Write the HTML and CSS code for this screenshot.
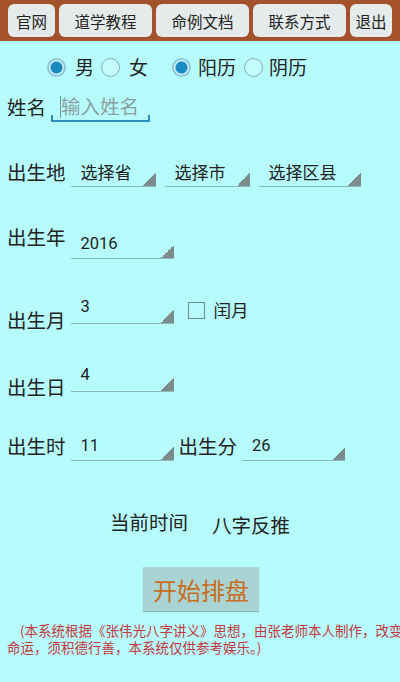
FILE: index.html
```
<!DOCTYPE html>
<html lang="zh">
<head>
  <meta charset="UTF-8" />
  <meta name="viewport" content="width=device-width, initial-scale=1.0"/>
  <title>八字排盘</title>
  <link rel="stylesheet" href="styles.css">
</head>
<body>

  <!-- 顶部菜单 -->
  <div class="menu">
    <button class="menu-btn w-sm">官网</button>
    <button class="menu-btn">道学教程</button>
    <button class="menu-btn">命例文档</button>
    <button class="menu-btn">联系方式</button>
    <button class="menu-btn w-xs">退出</button>
  </div>

  <!-- 性别 / 历法 -->
  <div class="radios">
    <span class="radio on"></span><span class="radio-txt">男</span>
    <span class="radio r2"></span><span class="radio-txt">女</span>
    <span class="radio on r3"></span><span class="radio-txt t3">阳历</span>
    <span class="radio r4"></span><span class="radio-txt t4">阴历</span>
  </div>

  <div class="fila fila-nombre">
    <span class="etiqueta">姓名</span>
    <input class="nombre" type="text" placeholder="输入姓名">
  </div>

  <div class="fila fila-lugar">
    <span class="etiqueta">出生地</span>
    <div class="spinner w-prov">选择省</div>
    <div class="spinner w-prov sep">选择市</div>
    <div class="spinner w-dist sep">选择区县</div>
  </div>

  <div class="fila fila-anio">
    <span class="etiqueta">出生年</span>
    <div class="spinner num">2016</div>
  </div>

  <div class="fila fila-mes">
    <span class="etiqueta">出生月</span>
    <div class="spinner num">3</div>
    <span class="check"></span>
    <span class="check-txt">闰月</span>
  </div>

  <div class="fila fila-dia">
    <span class="etiqueta">出生日</span>
    <div class="spinner num">4</div>
  </div>

  <div class="fila fila-hora">
    <span class="etiqueta">出生时</span>
    <div class="spinner num">11</div>
    <span class="etiqueta">出生分</span>
    <div class="spinner num">26</div>
  </div>

  <div class="acciones">
    <button class="accion">当前时间</button>
    <button class="accion bajo">八字反推</button>
  </div>

  <button class="empezar">开始排盘</button>

  <p class="aviso">(本系统根据《张伟光八字讲义》思想，由张老师本人制作，改变<br>命运，须积德行善，本系统仅供参考娱乐。)</p>

</body>
</html>
```

FILE: styles.css
```
html, body {
  margin: 0;
  overflow: hidden;
}

body {
  background-color: #b6fcfc;
  color: #222;
  font-family: Roboto, "Noto Sans CJK SC", sans-serif;
  width: 400px;
  height: 682px;
}

button {
  font-family: "Noto Sans CJK SC", sans-serif;
  border: none;
  padding: 0;
  cursor: pointer;
}

/* Menu */
.menu {
  background-color: #a3522b;
  height: 41px;
  box-sizing: border-box;
  padding: 4px 0 0 8px;
  display: flex;
  gap: 4px;
}

.menu-btn {
  width: 93px;
  height: 33px;
  background-color: #e5ebea;
  border-radius: 6px;
  font-size: 15.5px;
  color: #222;
}

.menu-btn.w-sm { width: 47px; }
.menu-btn.w-xs { width: 42px; }

/* Radios */
.radios {
  margin-top: 14px;
  height: 24px;
  padding-left: 47px;
  display: flex;
  align-items: center;
  font-family: "Noto Sans CJK SC", sans-serif;
  font-size: 19px;
}

.radio {
  width: 19px;
  height: 19px;
  box-sizing: border-box;
  border-radius: 50%;
  border: 1.5px solid #86aeb6;
  background: #c4fbfb;
}

.radio.on {
  border: 2px solid #8fc6dc;
  background: radial-gradient(circle, #1a8ac3 0 5.5px, #d6f4f8 6.5px);
}

.radio-txt { margin-left: 9px; line-height: 24px; }
.radio.r2 { margin-left: 7px; }
.radio.r3 { margin-left: 24px; }
.radio-txt.t3 { margin-left: 7px; }
.radio.r4 { margin-left: 8px; }
.radio-txt.t4 { margin-left: 6px; }

/* Filas */
.fila {
  display: flex;
  align-items: flex-start;
  padding-left: 7px;
}

.etiqueta {
  font-family: "Noto Sans CJK SC", sans-serif;
  font-size: 19.5px;
  line-height: 26px;
  margin-right: 5px;
  color: #222;
}

.fila-nombre { margin-top: 13px; height: 30px; }
.fila-nombre .etiqueta { margin-top: 2px; }

.nombre {
  width: 99px;
  height: 30px;
  box-sizing: border-box;
  border: none;
  border-bottom: 2px solid #2b8fc2;
  outline: none;
  padding: 0 0 2px 10px;
  font-family: "Noto Sans CJK SC", sans-serif;
  font-size: 19.5px;
  background:
    linear-gradient(#6a9aa8, #6a9aa8) 9px 4px / 1px 22px no-repeat,
    linear-gradient(#2b8fc2, #2b8fc2) left bottom / 2px 5px no-repeat,
    linear-gradient(#2b8fc2, #2b8fc2) right bottom / 2px 5px no-repeat;
}

.nombre::placeholder { color: #8d9e9e; }

.spinner {
  width: 103px;
  height: 30px;
  box-sizing: border-box;
  padding-left: 10px;
  display: flex;
  align-items: center;
  border-bottom: 1px solid #8fb8b8;
  font-family: "Noto Sans CJK SC", sans-serif;
  font-size: 17px;
  color: #222;
  background: linear-gradient(to bottom right, transparent 50%, #7c8b8b 50%) right bottom / 13px 13px no-repeat;
}

.spinner.num {
  font-family: Roboto, sans-serif;
  font-size: 16.5px;
}

.spinner.w-prov { width: 85px; }
.spinner.w-dist { width: 102px; }
.spinner.sep { margin-left: 9px; }

.fila-lugar { margin-top: 35px; height: 30px; }
.fila-lugar .etiqueta { margin-top: 2px; }

.fila-anio { margin-top: 37px; height: 35px; }
.fila-anio .spinner { margin-top: 5px; padding-top: 0; }

.fila-mes { margin-top: 35px; height: 39px; }
.fila-mes .etiqueta { margin-top: 13px; }
.fila-mes .spinner,
.fila-dia .spinner { align-items: flex-start; padding-top: 3px; }

.check {
  width: 17px;
  height: 17px;
  box-sizing: border-box;
  border: 1.5px solid #6d8c8c;
  margin: 8px 0 0 14px;
}

.check-txt {
  font-family: "Noto Sans CJK SC", sans-serif;
  font-size: 17.5px;
  line-height: 24px;
  margin: 4px 0 0 9px;
}

.fila-dia { margin-top: 29px; height: 38px; }
.fila-dia .etiqueta { margin-top: 12px; }

.fila-hora { margin-top: 31px; height: 30px; }
.fila-hora .etiqueta { margin-top: 2px; }
.fila-hora .spinner + .etiqueta { margin-left: 5px; }

/* Acciones */
.acciones {
  margin-top: 48px;
  height: 32px;
  display: flex;
  padding-left: 110px;
  gap: 24px;
}

.accion {
  background: none;
  font-size: 19.5px;
  line-height: 26px;
  height: 26px;
  color: #222;
}

.accion.bajo { margin-top: 3px; }

.empezar {
  display: block;
  margin: 26px 0 0 143px;
  width: 116px;
  height: 44px;
  background-color: #a9d4d4;
  box-shadow: 0 1px 1px #8fb4b4;
  color: #c96d1d;
  font-size: 24px;
}

.aviso {
  margin: 11px 0 0;
  padding-left: 7px;
  width: 420px;
  text-indent: 13px;
  white-space: nowrap;
  font-family: "Noto Sans CJK SC", sans-serif;
  font-size: 13.5px;
  line-height: 17px;
  color: #c4373a;
}
```
